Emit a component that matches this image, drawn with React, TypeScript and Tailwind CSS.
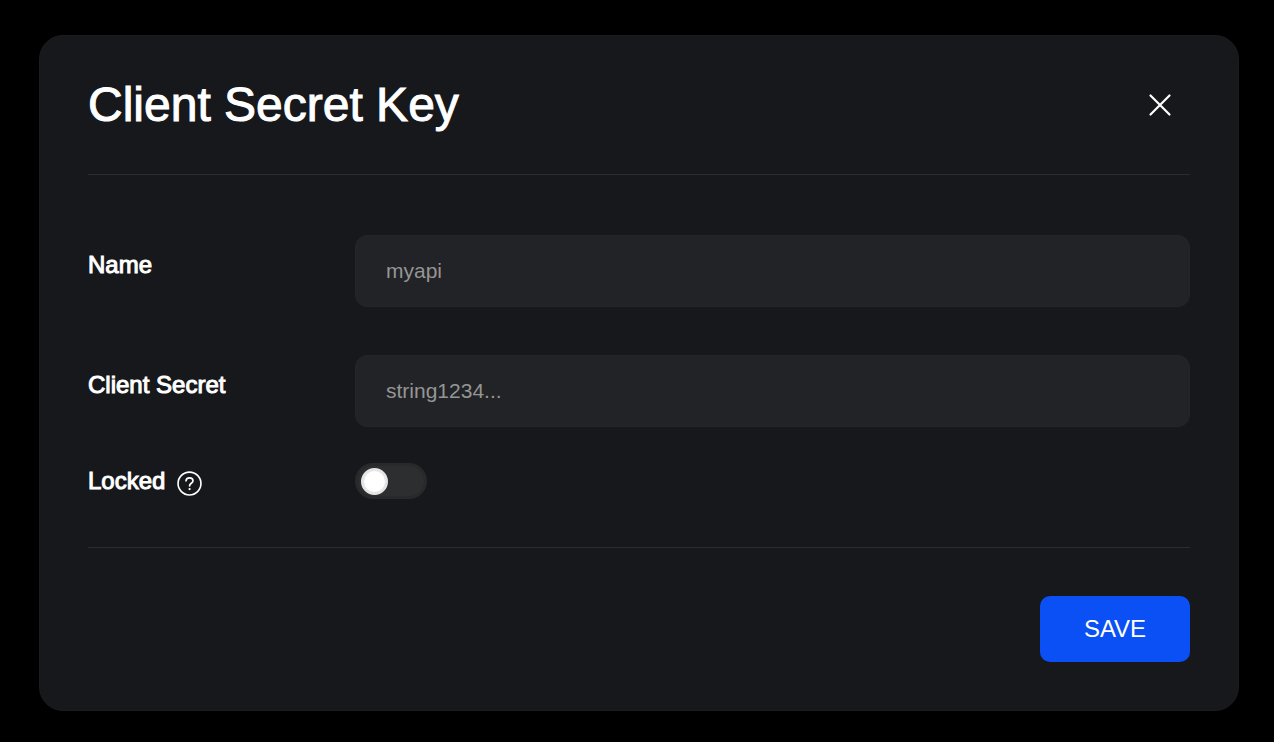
import { useState } from "react";

const fieldClass =
  "h-[72px] min-w-0 flex-1 rounded-xl border border-[#242528] bg-[#222326] px-[30px] text-[21px] text-white placeholder:text-[#959595] placeholder:opacity-100 outline-none focus:border-[#4a4b50]";
const labelClass = "w-[267px] shrink-0 text-2xl text-white [-webkit-text-stroke:1px_white]";

function Field({ id, label, placeholder }: { id: string; label: string; placeholder: string }) {
  return (
    <div className="flex items-start">
      <label htmlFor={id} className={`${labelClass} pt-[14px]`}>
        {label}
      </label>
      <input id={id} type="text" placeholder={placeholder} className={fieldClass} />
    </div>
  );
}

export default function App() {
  const [locked, setLocked] = useState(false);
  return (
    <div className="min-h-screen bg-black pt-[35px] pr-[35px] pb-[31px] pl-[39px] font-['Liberation_Sans',Arial,sans-serif]">
      <form
        className="rounded-3xl border border-[#1b1c1f] bg-[#17181b] px-12 pb-12"
        onSubmit={(e) => e.preventDefault()}
      >
        <header className="flex items-center justify-between border-b border-[#2b2c2f] pt-[39px] pb-[39px]">
          <h1 className="text-5xl leading-[56px] text-white [-webkit-text-stroke:1px_white]">
            Client Secret Key
          </h1>
          <button type="button" aria-label="Close" className="flex size-[60px] items-center justify-center text-white">
            <svg viewBox="0 0 24 24" className="size-6" fill="none" stroke="currentColor" strokeWidth="2.2" strokeLinecap="round">
              <path d="M2.5 2.5 21.5 21.5M21.5 2.5 2.5 21.5" />
            </svg>
          </button>
        </header>

        <div className="flex flex-col gap-12 border-b border-[#2b2c2f] pt-[60px] pb-12">
          <Field id="name" label="Name" placeholder="myapi" />
          <div className="flex flex-col gap-9">
            <Field id="secret" label="Client Secret" placeholder="string1234..." />
            <div className="flex h-9 items-center">
              <div className={`${labelClass} flex items-center gap-3`}>
                <label htmlFor="locked">Locked</label>
                <button type="button" aria-label="About locked keys" className="pt-1">
                  <svg viewBox="0 0 26 26" className="size-[25px]" fill="none" stroke="currentColor" strokeLinecap="round">
                    <circle cx="13" cy="13" r="11.9" strokeWidth="1.7" />
                    <path d="M9.4 10.2C9.500 8.200 11 7.100 13 7.100c2.100 0 3.600 1.300 3.600 3.100 0 2.700-3.500 2.500-3.500 5.200" strokeWidth="1.800" />
                    <circle cx="13.100" cy="18.800" r="1.200" fill="currentColor" stroke="none" />
                  </svg>
                </button>
              </div>
              <input
                id="locked"
                type="checkbox"
                role="switch"
                checked={locked}
                onChange={(e) => setLocked(e.target.checked)}
                className="flex h-9 w-[72px] appearance-none items-center rounded-full border-3 border-[#28292a] bg-[#2d2e2f] px-[3px] before:size-[27px] before:rounded-full before:border-3 before:border-[#e5e5e5] before:bg-white checked:justify-end checked:bg-[#0b50f4]"
              />
            </div>
          </div>
        </div>

        <footer className="flex justify-end pt-12">
          <button type="submit" className="h-[66px] w-[150px] rounded-[10px] bg-[#0b50f4] text-2xl text-white">
            SAVE
          </button>
        </footer>
      </form>
    </div>
  );
}
